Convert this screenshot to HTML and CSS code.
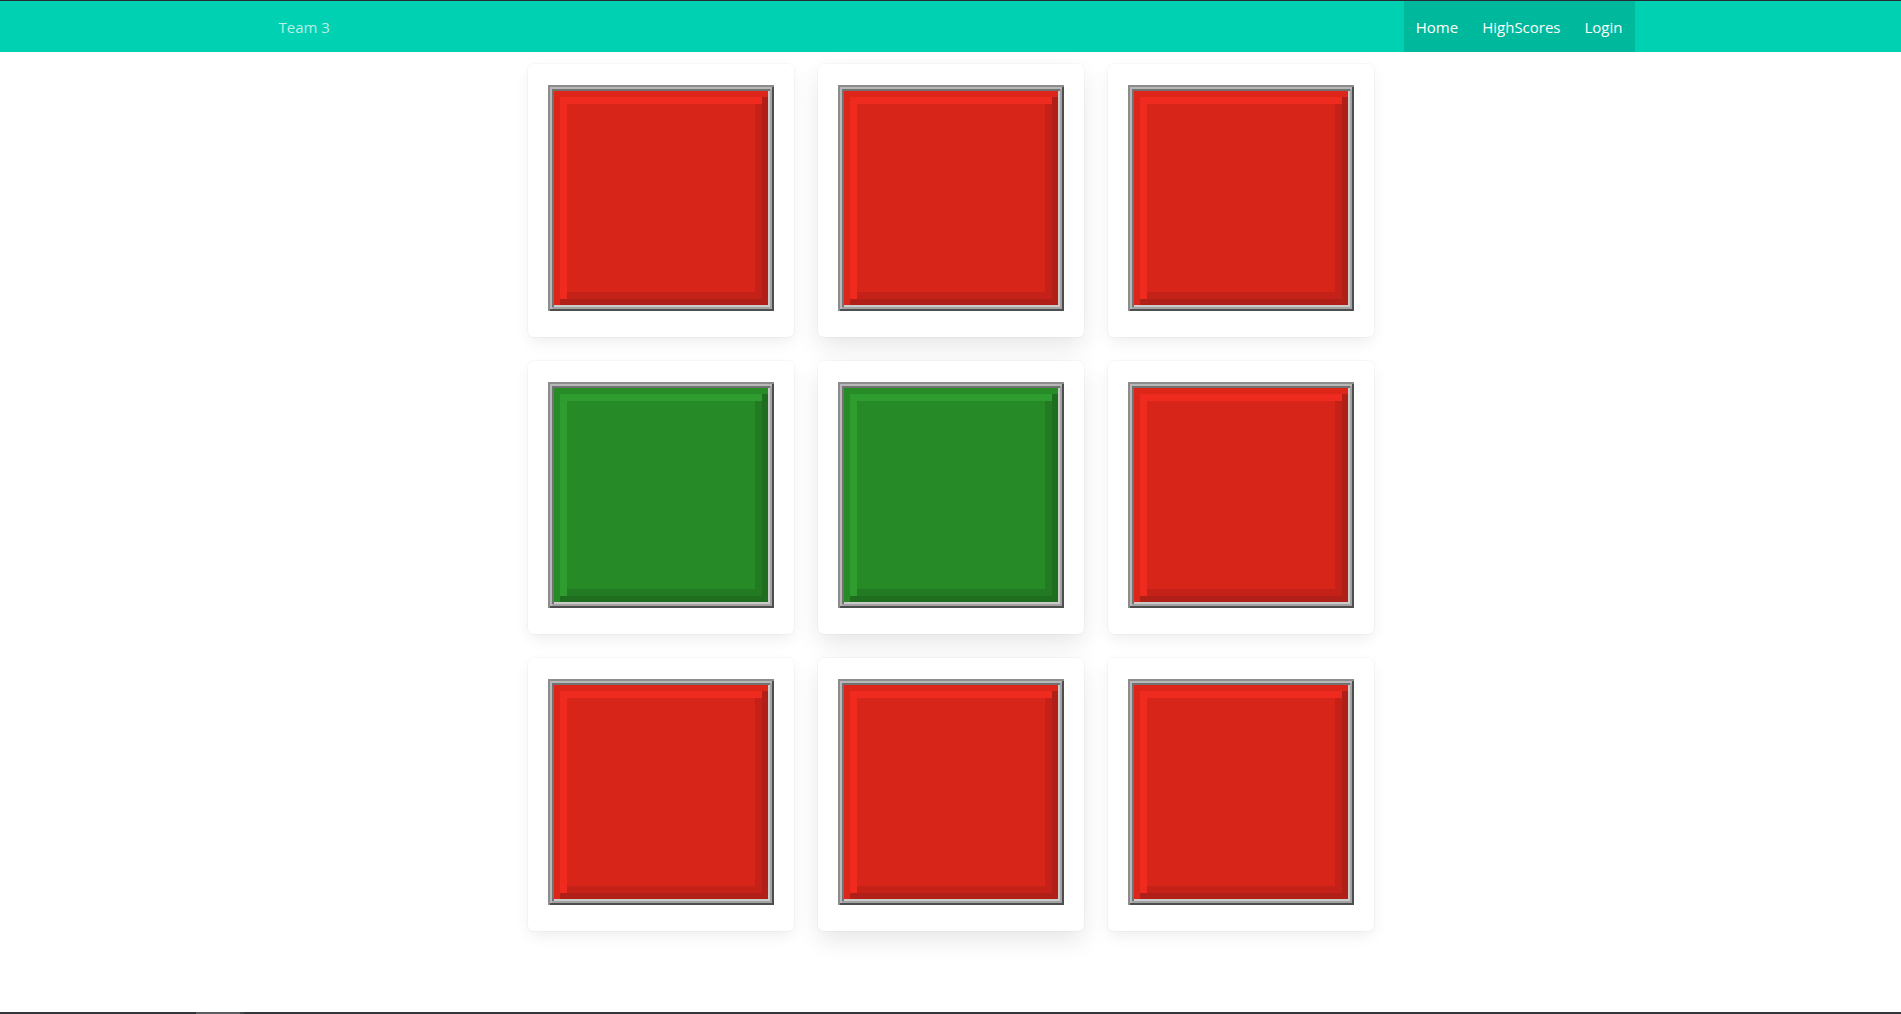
FILE: index.html
```html
<!DOCTYPE html>
<html lang="en">
<head>
<meta charset="utf-8">
<title>Team 3</title>
<link rel="stylesheet" href="styles.css">
</head>
<body>
<div class="topline"></div>
<nav class="navbar">
  <div class="nav-container">
    <a class="nav-item brand" href="#">Team 3</a>
    <div class="nav-end">
      <a class="nav-item" href="#">Home</a>
      <a class="nav-item" href="#">HighScores</a>
      <a class="nav-item" href="#">Login</a>
    </div>
  </div>
</nav>
<main class="board">
  <div class="tile"><div class="frame"><div class="light red"></div></div></div>
  <div class="tile lifted"><div class="frame"><div class="light red"></div></div></div>
  <div class="tile"><div class="frame"><div class="light red"></div></div></div>
  <div class="tile"><div class="frame"><div class="light green"></div></div></div>
  <div class="tile lifted"><div class="frame"><div class="light green"></div></div></div>
  <div class="tile"><div class="frame"><div class="light red"></div></div></div>
  <div class="tile"><div class="frame"><div class="light red"></div></div></div>
  <div class="tile lifted"><div class="frame"><div class="light red"></div></div></div>
  <div class="tile"><div class="frame"><div class="light red"></div></div></div>
</main>
<div class="bottombar"><div class="thumb"></div></div>
</body>
</html>
```
FILE: styles.css
```css
* { box-sizing: border-box; }
html, body { margin: 0; padding: 0; background: #ffffff; }
body {
  font-family: "Open Sans", "Noto Sans", "Liberation Sans", sans-serif;
  font-size: 15px;
  min-height: 1014px;
}
.topline { height: 1px; background: #262b33; }
.navbar { height: 51px; background: #00d1b2; }
.nav-container {
  width: 1368px;
  margin: 0 auto;
  height: 100%;
  display: flex;
  justify-content: space-between;
  align-items: stretch;
}
.nav-item {
  display: flex;
  align-items: center;
  padding: 2px 12px 0;
  color: #ffffff;
  text-decoration: none;
  line-height: 1.5;
}
.brand { color: #b8f0e7; }
.nav-end { display: flex; background: #00b89c; }

.board {
  width: 846px;
  margin: 12px auto 0;
  display: grid;
  grid-template-columns: repeat(3, 266px);
  grid-auto-rows: 273px;
  gap: 24px;
}
.tile {
  background: #fff;
  border-radius: 6px;
  padding: 21px 20px 26px;
  box-shadow: 0 6px 16px -2px rgba(10,10,10,0.08), 0 0 0 1px rgba(10,10,10,0.025);
}
.tile.lifted {
  box-shadow: 0 10px 26px -2px rgba(10,10,10,0.11), 0 0 0 1px rgba(10,10,10,0.025);
}
.frame {
  width: 226px;
  height: 226px;
  padding: 6px;
  box-shadow:
    inset 2px 2px 0 #8c8c8c, inset -2px -2px 0 #4e4e4e,
    inset 4px 4px 0 #b8b8b8, inset -4px -4px 0 #a2a2a2,
    inset 6px 6px 0 #727272, inset -6px -6px 0 #cbcbcb;
}
.light {
  height: 100%;
}
.red {
  background: #d7251a;
  box-shadow:
    inset 6px 6px 0 #dc2619, inset -6px -6px 0 #b01f18,
    inset 13px 13px 0 #ef2a1f, inset -13px -13px 0 #c42219;
}
.green {
  background: #268a26;
  box-shadow:
    inset 6px 6px 0 #278c27, inset -6px -6px 0 #1f6e1f,
    inset 13px 13px 0 #2e9c2e, inset -13px -13px 0 #227b22;
}

.bottombar {
  position: fixed;
  left: 0;
  right: 0;
  bottom: 0;
  height: 2px;
  background: #33363b;
}
.thumb {
  margin-left: 196px;
  width: 48px;
  height: 100%;
  background: #5b5d60;
  border-right: 4px solid #44464a;
}
```
